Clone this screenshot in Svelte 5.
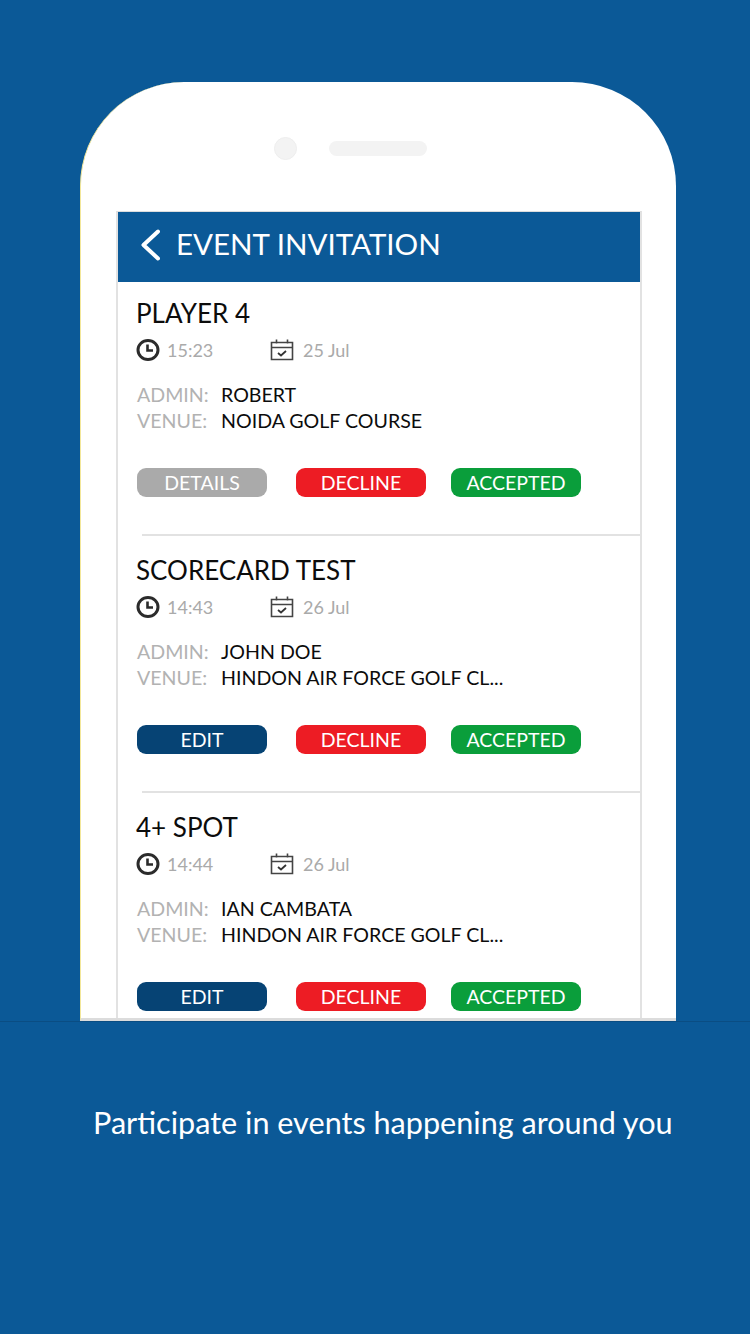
<script>
	const events = [
		{ title: 'PLAYER 4', time: '15:23', date: '25 Jul', admin: 'ROBERT', venue: 'NOIDA GOLF COURSE', action: 'DETAILS', kind: 'details' },
		{ title: 'SCORECARD TEST', time: '14:43', date: '26 Jul', admin: 'JOHN DOE', venue: 'HINDON AIR FORCE GOLF CL...', action: 'EDIT', kind: 'edit' },
		{ title: '4+ SPOT', time: '14:44', date: '26 Jul', admin: 'IAN CAMBATA', venue: 'HINDON AIR FORCE GOLF CL...', action: 'EDIT', kind: 'edit' }
	];
</script>

<div class="page">
	<div class="top">
		<div class="phone">
			<div class="sensors">
				<span class="camera"></span>
				<span class="speaker"></span>
			</div>
			<div class="screen">
				<header class="bar">
					<svg class="back" width="20" height="32" viewBox="0 0 20 32" aria-hidden="true">
						<path d="M18 2.500 3.500 16 18 29.500" fill="none" stroke="#fff" stroke-width="4" stroke-linecap="round" stroke-linejoin="round" />
					</svg>
					<h1>EVENT INVITATION</h1>
				</header>

				{#each events as event, i}
					<section class="event">
						<h2>{event.title}</h2>
						<div class="meta">
							<span class="stamp time">
								<svg width="24" height="22" viewBox="0 0 24 22" aria-hidden="true">
									<ellipse cx="12" cy="11" rx="10" ry="9.500" fill="none" stroke="#2b2b2b" stroke-width="3" />
									<path d="M11.500 5.500v6h5.500" fill="none" stroke="#2b2b2b" stroke-width="2.600" />
								</svg>
								{event.time}
							</span>
							<span class="stamp">
								<svg width="24" height="22" viewBox="0 0 24 22" aria-hidden="true">
									<path d="M1.500 3.500h21v17h-21zM1.500 8.500h21M6.500 0.500v4M17.500 0.500v4" fill="none" stroke="#444" stroke-width="1.600" />
									<path d="M8 14l3 2.500 5-4.500" fill="none" stroke="#333" stroke-width="1.800" />
								</svg>
								{event.date}
							</span>
						</div>
						<dl>
							<dt>ADMIN:</dt>
							<dd>{event.admin}</dd>
							<dt>VENUE:</dt>
							<dd>{event.venue}</dd>
						</dl>
						<div class="actions">
							<button class={event.kind}>{event.action}</button>
							<button class="decline">DECLINE</button>
							<button class="accepted">ACCEPTED</button>
						</div>
					</section>
					{#if i < events.length - 1}
						<div class="rule"></div>
					{/if}
				{/each}
			</div>
		</div>
	</div>
	<footer class="caption">Participate in events happening around you</footer>
</div>

<style>
	:global(body) {
		margin: 0;
	}

	.page {
		width: 750px;
		height: 1334px;
		background: #0b5997;
		font-family: Lato, "Open Sans", sans-serif;
		display: flex;
		flex-direction: column;
		overflow: hidden;
	}

	.top {
		height: 1022px;
		padding: 82px 74px 0 80px;
		box-sizing: border-box;
		flex: none;
		overflow: hidden;
		border-bottom: 1px solid #0a4d83;
	}

	.phone {
		height: 939px;
		background: #fff;
		border-radius: 104px 104px 0 0;
		padding: 0 34px 0 35px;
		overflow: hidden;
		border-left: 1px solid #f3e79a;
		box-sizing: border-box;
		border-bottom: 3px solid #dcdcdc;
	}

	.sensors {
		height: 129px;
		padding-left: 158px;
		padding-top: 55px;
		box-sizing: border-box;
		display: flex;
		align-items: flex-start;
		gap: 32px;
	}

	.camera {
		width: 23px;
		height: 23px;
		border-radius: 50%;
		background: #f3f3f3;
		border: 1px solid #eeeeee;
		box-sizing: border-box;
	}

	.speaker {
		width: 98px;
		height: 15px;
		margin-top: 4px;
		border-radius: 8px;
		background: #f3f3f3;
	}

	.screen {
		border: 2px solid #e2e2e2;
		border-top: 1px solid #dddddd;
		border-bottom: none;
		height: 807px;
		overflow: hidden;
	}

	.bar {
		height: 70px;
		background: #0b5997;
		display: flex;
		align-items: center;
		padding-left: 22px;
		gap: 16px;
		color: #fff;
	}

	.back {
		flex: none;
		margin-top: -5px;
	}

	h1 {
		margin: -7px 0 0;
		font-size: 29.500px;
		font-weight: 400;
		line-height: 1;
	}

	.event {
		height: 252px;
		padding: 15px 0 0 18px;
		box-sizing: border-box;
	}

	.rule {
		height: 2px;
		margin: 0 0 3px 24px;
		background: #e2e2e2;
	}

	h2 {
		margin: 0;
		font-size: 26px;
		font-weight: 400;
		line-height: 32px;
		color: #0c0c0c;
	}

	.meta {
		display: flex;
		margin-top: 9px;
		height: 24px;
		align-items: center;
		font-size: 18px;
		color: #aaa;
	}

	.stamp {
		display: flex;
		align-items: center;
		gap: 7px;
	}

	.stamp svg {
		flex: none;
	}

	.time {
		width: 134px;
	}

	.stamp:not(.time) {
		gap: 9px;
	}

	dl {
		display: grid;
		grid-template-columns: 84px 1fr;
		margin: 20px 0 0 1px;
		font-size: 19.600px;
		line-height: 26px;
	}

	dt {
		color: #b2b2b2;
	}

	dd {
		margin: 0;
		color: #0c0c0c;
	}

	.actions {
		display: flex;
		margin: 34px 0 0 1px;
	}

	button {
		width: 130px;
		height: 29px;
		padding: 0;
		border: none;
		border-radius: 9px;
		color: #fff;
		font: 400 19.500px Lato, "Open Sans", sans-serif;
	}

	.details {
		background: #aaaaaa;
		margin-right: 29px;
	}

	.edit {
		background: #064374;
		margin-right: 29px;
	}

	.decline {
		background: #ed1c24;
		margin-right: 25px;
	}

	.accepted {
		background: #0a9e3b;
	}

	.caption {
		padding: 82px 0 0 93px;
		color: #fff;
		font-size: 30.600px;
		line-height: 38px;
		white-space: nowrap;
	}
</style>
